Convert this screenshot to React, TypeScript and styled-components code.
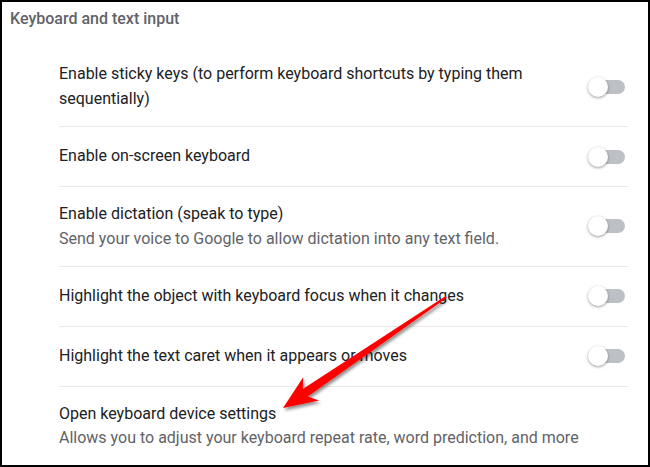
import React from "react";
import styled, { createGlobalStyle } from "styled-components";

const Global = createGlobalStyle`
  html, body { margin: 0; padding: 0; background: #fff; }
  body { font-family: Roboto, "Noto Sans", Arial, sans-serif; }
`;

const Frame = styled.div`
  position: relative;
  width: 650px;
  height: 467px;
  box-sizing: border-box;
  border: 2px solid #000;
  background: #fff;
  overflow: hidden;
`;

const Title = styled.h2`
  margin: 0;
  padding: 7px 0 18px 8px;
  font-size: 16px;
  line-height: 20px;
  font-weight: 500;
  color: #5f6368;
`;

const List = styled.div`
  display: flex;
  flex-direction: column;
  margin: 0 20px 0 57px;
`;

const Row = styled.div<{ $divider?: boolean }>`
  display: flex;
  align-items: center;
  box-sizing: border-box;
  min-height: 60px;
  padding: 15px 0;
  border-top: ${(p) => (p.$divider ? "1px solid #e9e9e9" : "none")};
`;

const TextBlock = styled.div`
  flex: 1;
  padding-right: 40px;
  display: flex;
  flex-direction: column;
`;

const Primary = styled.div`
  font-size: 16px;
  line-height: 24.5px;
  color: #202124;
`;

const Secondary = styled.div`
  font-size: 16px;
  line-height: 24px;
  color: #5f6368;
  white-space: nowrap;
`;

const Toggle = styled.div`
  position: relative;
  flex: none;
  width: 37px;
  height: 20px;
  margin-right: 3px;
`;

const Track = styled.div`
  position: absolute;
  left: 3px;
  top: 3px;
  width: 34px;
  height: 14px;
  border-radius: 7px;
  background: #bdc1c6;
`;

const Knob = styled.div`
  position: absolute;
  left: 0;
  top: 0;
  width: 20px;
  height: 20px;
  border-radius: 50%;
  background: #fff;
  box-shadow: 0 1px 3px rgba(0, 0, 0, 0.4);
`;

const ArrowLayer = styled.svg`
  position: absolute;
  left: -2px;
  top: -2px;
  pointer-events: none;
`;

const Switch = () => (
  <Toggle>
    <Track />
    <Knob />
  </Toggle>
);

type Item = { title: string; sub?: string; toggle: boolean };

const items: Item[] = [
  {
    title:
      "Enable sticky keys (to perform keyboard shortcuts by typing them sequentially)",
    toggle: true,
  },
  { title: "Enable on-screen keyboard", toggle: true },
  {
    title: "Enable dictation (speak to type)",
    sub: "Send your voice to Google to allow dictation into any text field.",
    toggle: true,
  },
  { title: "Highlight the object with keyboard focus when it changes", toggle: true },
  { title: "Highlight the text caret when it appears or moves", toggle: true },
  {
    title: "Open keyboard device settings",
    sub: "Allows you to adjust your keyboard repeat rate, word prediction, and more",
    toggle: false,
  },
];

export default function App() {
  return (
    <>
      <Global />
      <Frame>
        <Title>Keyboard and text input</Title>
        <List>
          {items.map((it, i) => (
            <Row key={i} $divider={i > 0}>
              <TextBlock>
                <Primary>{it.title}</Primary>
                {it.sub && <Secondary>{it.sub}</Secondary>}
              </TextBlock>
              {it.toggle && <Switch />}
            </Row>
          ))}
        </List>
        <ArrowLayer width="650" height="467" viewBox="0 0 650 467">
          <defs>
            <filter id="sh" x="-20%" y="-20%" width="140%" height="140%">
              <feDropShadow dx="1.5" dy="2.5" stdDeviation="1.8" floodColor="#000" floodOpacity="0.45" />
            </filter>
          </defs>
          <polygon
            filter="url(#sh)"
            fill="#f00"
            points="283,408 303.2,377.3 302.8,389.1 445.3,296.3 446.8,297.4 446.5,297.9 307.8,396.5 319,400.5"
          />
        </ArrowLayer>
      </Frame>
    </>
  );
}
